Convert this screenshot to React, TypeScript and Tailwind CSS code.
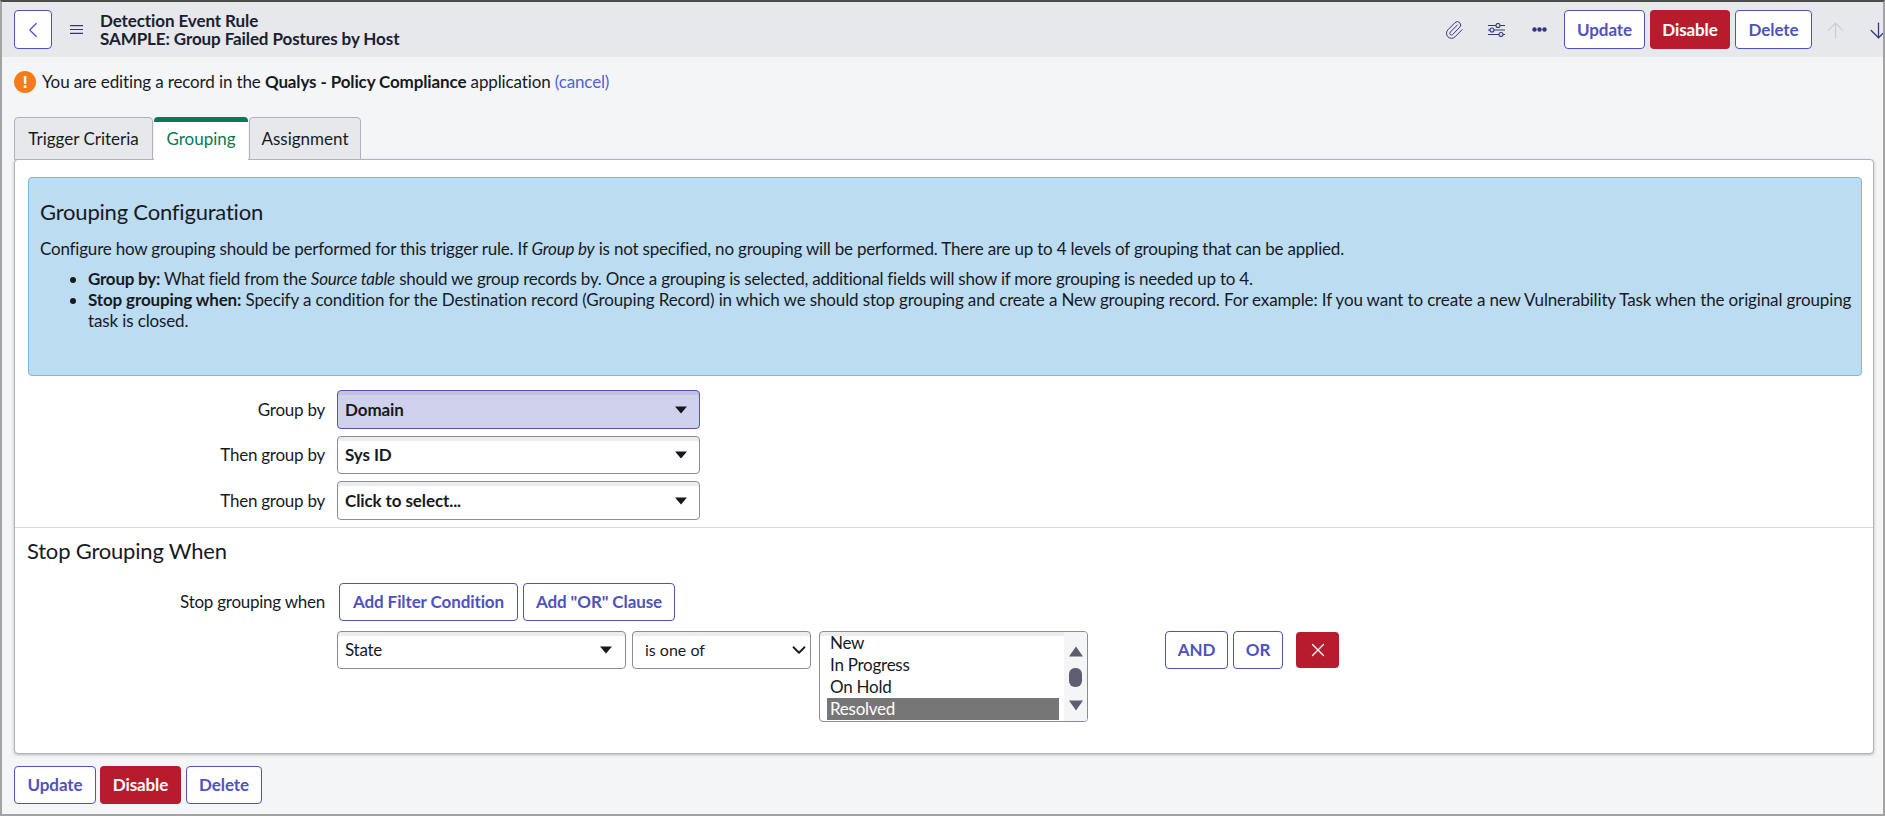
import React from 'react';
import { ArrowDown, ArrowUp, ChevronDown, ChevronLeft, Paperclip, X } from 'lucide-react';

const accentBtn =
  'flex items-center justify-center rounded-[4px] border border-[#4f52bd] bg-white text-[17px] font-bold tracking-[-0.1px] text-[#4f52bd]';
const redBtn =
  'flex items-center justify-center rounded-[4px] bg-[#b71c2e] text-[17px] font-bold tracking-[-0.1px] text-white';
const bodyText = 'text-[17px] tracking-[-0.25px]';

const Caret = () => (
  <svg width="14" height="8" viewBox="0 0 14 8" className="shrink-0">
    <path d="M1 0.5h12L7 7.5z" fill="#16181d" />
  </svg>
);

const FieldRow = ({
  label,
  value,
  active,
  h,
}: {
  label: string;
  value: string;
  active?: boolean;
  h: string;
}) => (
  <div className="flex items-center gap-[12px]">
    <div className={`w-[310px] text-right text-[#181a1f] ${bodyText}`}>{label}</div>
    <div
      className={`flex w-[363px] ${h} items-center justify-between rounded-[4px] border pl-[7px] pr-[11px] text-[17px] font-bold tracking-[-0.1px] text-[#181a1f] shadow-[inset_0_4px_0_rgba(0,0,0,0.07)] ${
        active ? 'border-[#4f52bd] bg-[#d0d1ec]' : 'border-[#8a8d96] bg-white'
      }`}
    >
      {value}
      <Caret />
    </div>
  </div>
);

const ActionButtons = ({ widths }: { widths: [string, string, string] }) => (
  <>
    <button className={`${accentBtn} ${widths[0]}`}>Update</button>
    <button className={`${redBtn} ${widths[1]}`}>Disable</button>
    <button className={`${accentBtn} ${widths[2]}`}>Delete</button>
  </>
);

export default function App() {
  return (
    <div className="flex h-screen w-full flex-col overflow-hidden border-x-2 border-b-2 border-t-2 border-x-[#a3a3a3] border-b-[#a3a3a3] border-t-[#4b4b4b] bg-[#f4f5f7] font-['Lato',sans-serif] text-[#181a1f]">
      {/* header */}
      <div className="flex h-[55px] shrink-0 items-center justify-between bg-[#e6e8ec] pl-[12px]">
        <div className="flex items-center">
          <button className="flex h-[39px] w-[38px] items-center justify-center rounded-[4px] border border-[#4f52bd] bg-white">
            <ChevronLeft size={26} strokeWidth={1.1} className="text-[#4f52bd]" />
          </button>
          <svg width="13" height="9" viewBox="0 0 13 9" className="ml-[18px]">
            <path d="M0 .6h13M0 4.5h13M0 8.4h13" stroke="#33357f" strokeWidth="1.1" />
          </svg>
          <div className="ml-[17px] text-[17px] font-bold leading-[18px] tracking-[-0.1px] text-[#1b2030]">
            <div>Detection Event Rule</div>
            <div>SAMPLE: Group Failed Postures by Host</div>
          </div>
        </div>
        <div className="mr-[-8px] flex h-[39px] items-center">
          <Paperclip size={20} strokeWidth={1.2} className="mr-[24px] text-[#33357f]" />
          <svg width="17" height="14" viewBox="0 0 17 14" fill="none" stroke="#33357f" strokeWidth="1.1" className="mr-[27px]">
            <path d="M0 2.5h8M12 2.5h5M0 7h2M6 7h11M0 11.5h11M15 11.5h2" />
            <circle cx="10" cy="2.5" r="2" />
            <circle cx="4" cy="7" r="2" />
            <circle cx="13" cy="11.5" r="2" />
          </svg>
          <svg width="15" height="5" viewBox="0 0 15 5" className="mr-[17px]" fill="#33357f">
            <circle cx="2.5" cy="2.5" r="2.2" />
            <circle cx="7.5" cy="2.5" r="2.2" />
            <circle cx="12.5" cy="2.5" r="2.2" />
          </svg>
          <div className="flex h-[39px] gap-[5px]">
            <ActionButtons widths={['w-[81px]', 'w-[80px]', 'w-[77px]']} />
          </div>
          <ArrowUp size={25} strokeWidth={1} className="ml-[11px] mt-[2px] text-[#c6c8d4]" />
          <ArrowDown size={25} strokeWidth={1.2} className="ml-[18px] mt-[2px] text-[#33357f]" />
        </div>
      </div>

      {/* notice */}
      <div className={`ml-[12px] mt-[13px] flex h-[24px] shrink-0 items-center ${bodyText}`}>
        <span className="flex h-[22px] w-[22px] items-center justify-center rounded-full bg-[#f57c1a] text-[17px] font-black text-white">
          !
        </span>
        <span className="ml-[6px] tracking-[-0.13px]">
          You are editing a record in the <b>Qualys - Policy Compliance</b> application{' '}
          <span className="text-[#4f62d8]">(cancel)</span>
        </span>
      </div>

      {/* tabs */}
      <div className="relative z-10 ml-[12px] mt-[23px] flex h-[43px] shrink-0 text-[17px]">
        <div className="flex w-[139px] items-center justify-center rounded-t-[4px] border border-[#b0b2bf] bg-[#e6e8ec]">
          Trigger Criteria
        </div>
        <div className="mx-px flex w-[94px] items-center justify-center rounded-t-[4px] border-t-[5px] border-t-[#057a55] bg-white pb-[5px] text-[#057a55]">
          Grouping
        </div>
        <div className="flex w-[112px] items-center justify-center rounded-t-[4px] border border-[#b0b2bf] bg-[#e6e8ec]">
          Assignment
        </div>
      </div>

      {/* card */}
      <div className="ml-[12px] mr-[9px] mt-[-1px] flex h-[595px] shrink-0 flex-col rounded-[4px] border border-[#b0b2bf] bg-white shadow-[0_1px_3px_rgba(0,0,0,0.25)]">
        <div className="ml-[13px] mr-[11px] mt-[17px] h-[199px] shrink-0 rounded-[4px] border border-[#7cb5df] bg-[#bcdcf1] pl-[11px] pr-[5px] pt-[19px]">
          <h2 className="text-[22px] leading-[30px] tracking-[-0.2px]">Grouping Configuration</h2>
          <p className="mt-[10px] text-[17px] leading-[24px] tracking-[-0.2px]">
            Configure how grouping should be performed for this trigger rule. If <i>Group by</i> is not specified, no
            grouping will be performed. There are up to 4 levels of grouping that can be applied.
          </p>
          <ul className="ml-[48px] mt-[7px] list-disc text-[17px] leading-[21px]">
            <li className="tracking-[-0.23px]">
              <b>Group by:</b> What field from the <i>Source table</i> should we group records by. Once a grouping is
              selected, additional fields will show if more grouping is needed up to 4.
            </li>
            <li className="tracking-[-0.13px]">
              <b>Stop grouping when:</b> Specify a condition for the Destination record (Grouping Record) in which we
              should stop grouping and create a New grouping record. For example: If you want to create a new
              Vulnerability Task when the original grouping task is closed.
            </li>
          </ul>
        </div>

        <div className="mt-[14px] flex flex-col gap-[7px]">
          <FieldRow label="Group by" value="Domain" active h="h-[39px]" />
          <FieldRow label="Then group by" value="Sys ID" h="h-[38px]" />
          <FieldRow label="Then group by" value="Click to select..." h="h-[39px]" />
        </div>

        <div className="mt-[7px] h-px shrink-0 bg-[#d9dadd]" />
        <h3 className="ml-[12px] mt-[9px] text-[22px] leading-[28px] tracking-[-0.2px]">Stop Grouping When</h3>

        <div className="mt-[18px] flex items-center">
          <div className={`w-[310px] text-right ${bodyText}`}>Stop grouping when</div>
          <div className="ml-[14px] flex gap-[5px]">
            <button className={`${accentBtn} h-[38px] w-[179px]`}>Add Filter Condition</button>
            <button className={`${accentBtn} h-[38px] w-[152px]`}>Add "OR" Clause</button>
          </div>
        </div>

        <div className={`ml-[322px] mt-[10px] flex items-start ${bodyText}`}>
          <div className="flex h-[38px] w-[289px] items-center justify-between rounded-[4px] border border-[#8a8d96] bg-white pl-[7px] pr-[12px] shadow-[inset_0_4px_0_rgba(0,0,0,0.07)]">
            State
            <Caret />
          </div>
          <div className="ml-[6px] flex h-[38px] w-[179px] items-center justify-between rounded-[4px] border border-[#8a8d96] bg-white pl-[12px] text-[16px] tracking-normal shadow-[inset_0_4px_0_rgba(0,0,0,0.07)]">
            is one of
            <ChevronDown size={22} strokeWidth={2} />
          </div>
          <div className="ml-[8px] flex h-[91px] w-[269px] overflow-hidden rounded-[4px] border border-[#8a8d96] bg-white shadow-[inset_0_4px_0_rgba(0,0,0,0.07)]">
            <div className="ml-[7px] w-[232px] leading-[22px]">
              <div className="pl-[3px]">New</div>
              <div className="pl-[3px]">In Progress</div>
              <div className="pl-[3px]">On Hold</div>
              <div className="bg-[#767676] pl-[3px] text-white">Resolved</div>
            </div>
            <div className="ml-[5px] flex flex-1 flex-col items-center bg-[#f4f5f7] pt-[14px]">
              <svg width="14" height="11" viewBox="0 0 14 11">
                <path d="M7 0.5L14 10.5H0z" fill="#5d5e72" />
              </svg>
              <div className="mt-[11px] h-[19px] w-[13px] rounded-[6px] bg-[#5d5e72]" />
              <svg width="14" height="11" viewBox="0 0 14 11" className="mt-[13px]">
                <path d="M0 0.5h14L7 10.5z" fill="#5d5e72" />
              </svg>
            </div>
          </div>
          <div className="ml-[77px] flex gap-[5px]">
            <button className={`${accentBtn} h-[38px] w-[63px]`}>AND</button>
            <button className={`${accentBtn} h-[38px] w-[50px]`}>OR</button>
          </div>
          <button className={`${redBtn} ml-[13px] mt-px h-[36px] w-[43px]`}>
            <X size={22} strokeWidth={1.4} />
          </button>
        </div>
      </div>

      {/* footer */}
      <div className="ml-[12px] mt-[12px] flex h-[38px] shrink-0 gap-[4px]">
        <ActionButtons widths={['w-[82px]', 'w-[81px]', 'ml-px w-[76px]']} />
      </div>
    </div>
  );
}
